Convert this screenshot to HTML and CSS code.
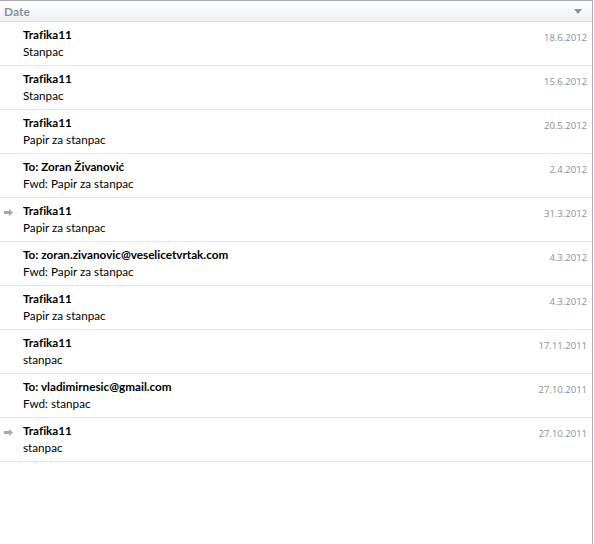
FILE: index.html
```html
<!DOCTYPE html>
<html>
<head>
<meta charset="utf-8">
<link rel="stylesheet" href="styles.css">
</head>
<body>
<div class="pane">
  <div class="header">
    <span class="header-title">Date</span>
    <span class="sort-arrow"></span>
  </div>
  <ul class="list">
    <li class="item"><span class="mark"></span><div class="body"><div class="top"><span class="from">Trafika11</span><span class="date">18.6.2012</span></div><div class="subject">Stanpac</div></div></li>
    <li class="item"><span class="mark"></span><div class="body"><div class="top"><span class="from">Trafika11</span><span class="date">15.6.2012</span></div><div class="subject">Stanpac</div></div></li>
    <li class="item"><span class="mark"></span><div class="body"><div class="top"><span class="from">Trafika11</span><span class="date">20.5.2012</span></div><div class="subject">Papir za stanpac</div></div></li>
    <li class="item"><span class="mark"></span><div class="body"><div class="top"><span class="from">To: Zoran Živanović</span><span class="date">2.4.2012</span></div><div class="subject">Fwd: Papir za stanpac</div></div></li>
    <li class="item"><span class="mark"><svg width="9" height="7" viewBox="0 0 9 7"><path d="M0 2h5V0l4 3.5L5 7V5H0z" fill="#a9a9a9"/></svg></span><div class="body"><div class="top"><span class="from">Trafika11</span><span class="date">31.3.2012</span></div><div class="subject">Papir za stanpac</div></div></li>
    <li class="item"><span class="mark"></span><div class="body"><div class="top"><span class="from">To: zoran.zivanovic@veselicetvrtak.com</span><span class="date">4.3.2012</span></div><div class="subject">Fwd: Papir za stanpac</div></div></li>
    <li class="item"><span class="mark"></span><div class="body"><div class="top"><span class="from">Trafika11</span><span class="date">4.3.2012</span></div><div class="subject">Papir za stanpac</div></div></li>
    <li class="item"><span class="mark"></span><div class="body"><div class="top"><span class="from">Trafika11</span><span class="date">17.11.2011</span></div><div class="subject">stanpac</div></div></li>
    <li class="item"><span class="mark"></span><div class="body"><div class="top"><span class="from">To: vladimirnesic@gmail.com</span><span class="date">27.10.2011</span></div><div class="subject">Fwd: stanpac</div></div></li>
    <li class="item"><span class="mark"><svg width="9" height="7" viewBox="0 0 9 7"><path d="M0 2h5V0l4 3.5L5 7V5H0z" fill="#a9a9a9"/></svg></span><div class="body"><div class="top"><span class="from">Trafika11</span><span class="date">27.10.2011</span></div><div class="subject">stanpac</div></div></li>
  </ul>
</div>
</body>
</html>
```
FILE: styles.css
```css
html, body {
  margin: 0;
  padding: 0;
  background: #fff;
}

.pane {
  width: 593px;
  height: 544px;
  border-right: 1px solid #a9b1bf;
  box-sizing: border-box;
  font-family: Lato, "Open Sans", sans-serif;
  font-variant-ligatures: none;
  color: #000;
}

.header {
  height: 20px;
  border-top: 1px solid #a4a9b2;
  border-bottom: 1px solid #d9dde3;
  background: linear-gradient(#ffffff, #eef0f3);
  display: flex;
  align-items: center;
  justify-content: space-between;
  padding: 0 10px 0 4px;
  box-sizing: content-box;
}

.header-title {
  font-size: 12px;
  font-weight: 700;
  color: #8791a2;
}

.sort-arrow {
  width: 0;
  height: 0;
  border-left: 4px solid transparent;
  border-right: 4px solid transparent;
  border-top: 5px solid #8c929b;
}

.list {
  list-style: none;
  margin: 0;
  padding: 0;
}

.item {
  height: 43px;
  border-bottom: 1px solid #e6e6e6;
  display: flex;
}

.mark {
  width: 23px;
  flex: none;
  display: flex;
  justify-content: flex-start;
  padding: 11px 0 0 4px;
  box-sizing: border-box;
}

.body {
  flex: 1;
  padding: 4px 5px 0 0;
}

.top {
  display: flex;
  justify-content: space-between;
  align-items: flex-start;
  height: 17px;
}

.from {
  font-size: 11.7px;
  font-weight: 700;
  line-height: 17px;
}

.date {
  font-family: "Open Sans", sans-serif;
  font-size: 9.5px;
  color: #8c8c96;
  line-height: 17px;
  padding-top: 3px;
}

.subject {
  font-size: 11.7px;
  line-height: 17px;
}
```
